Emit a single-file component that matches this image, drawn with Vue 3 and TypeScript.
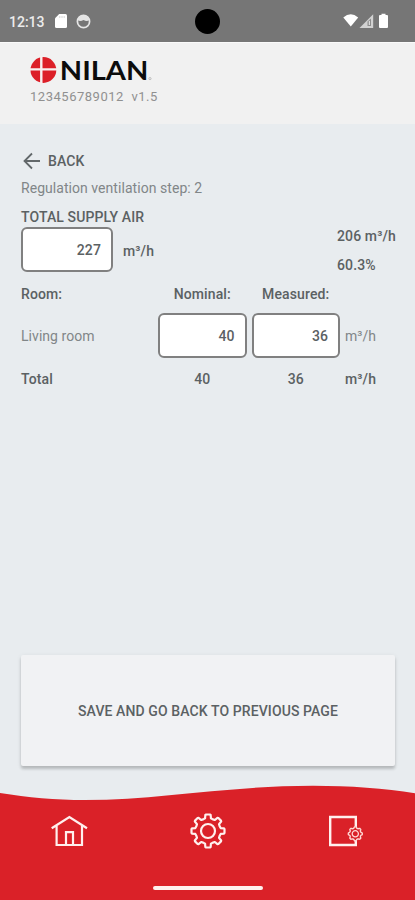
<script setup lang="ts">
import { computed, ref } from 'vue'

interface Room {
  name: string
  nominal: string
  measured: string
}

const totalAir = ref('227')
const rooms = ref<Room[]>([{ name: 'Living room', nominal: '40', measured: '36' }])

const nominalTotal = computed(() => rooms.value.reduce((sum, r) => sum + Number(r.nominal), 0))
const measuredTotal = computed(() => rooms.value.reduce((sum, r) => sum + Number(r.measured), 0))

// Closed outline of a cog centred on 0,0
function cog(teeth: number, outer: number, inner: number): string {
  const profile: [number, number][] = [
    [-0.5, inner],
    [-0.29, inner + 0.4],
    [-0.21, outer - 0.4],
    [-0.14, outer],
    [0.14, outer],
    [0.21, outer - 0.4],
    [0.29, inner + 0.4],
  ]
  const points: string[] = []
  for (let i = 0; i < teeth; i++) {
    for (const [offset, radius] of profile) {
      const a = ((i + offset) / teeth) * Math.PI * 2
      points.push(`${(radius * Math.sin(a)).toFixed(2)},${(-radius * Math.cos(a)).toFixed(2)}`)
    }
  }
  return `M${points.join('L')}Z`
}

const bigCog = cog(8, 16.6, 12.6)
const smallCog = cog(8, 7, 5.6)
</script>

<template>
  <div class="screen">
    <div class="status">
      <span class="clock">12:13</span>
      <svg class="sd" width="12" height="14" viewBox="0 0 12 14">
        <path d="M4.2 0H10.5Q12 0 12 1.5V12.5Q12 14 10.5 14H1.5Q0 14 0 12.5V4.2Z" fill="#fff" />
        <path d="M4.8 2v2M7 2v2M9.2 2v2" stroke="#ccc" stroke-width=".8" />
      </svg>
      <svg class="face" width="15" height="15" viewBox="0 0 15 15">
        <circle cx="7.5" cy="7.5" r="6.1" fill="none" stroke="#e6e6e6" stroke-width="1.7" />
        <path d="M1.6 5.8Q2.5 1.4 7.5 1.4Q12.5 1.4 13.4 5.8Q11 8.2 7.5 6Q4 8.2 1.6 5.8Z" fill="#e4e4e4" />
      </svg>
      <span class="camera"></span>
      <svg class="signals" width="46" height="16" viewBox="0 0 46 16">
        <path d="M.3 4.5Q7.7-1.8 15.2 4.5L7.8 13.6Z" fill="#fff" />
        <path d="M16.5 15L30.2 1.2V15Z" fill="#d2d2d2" />
        <path d="M24.5 13V8.5L28 5.5V13Z" fill="#8c8c8c" />
        <path d="M26.3 7.8V12" stroke="#eee" />
        <path d="M36 3Q36 2 37 2H38.5V.8H42.5V2H44Q45 2 45 3V14Q45 15 44 15H37Q36 15 36 14Z" fill="#fff" />
      </svg>
    </div>

    <header class="header">
      <svg class="logo" width="124" height="38" viewBox="0 -5 124 38">
        <circle cx="13.4" cy="14" r="12.9" fill="#dc1f28" />
        <path d="M0 13.4H27M11.3 0V28" stroke="#f8f0f0" stroke-width="2.4" />
        <text class="brand" x="29.8" y="24" textLength="88.6" lengthAdjust="spacingAndGlyphs">NILAN</text>
        <circle cx="120" cy="22.6" r="1.1" fill="none" stroke="#aaa" stroke-width=".7" />
      </svg>
      <span class="serial">123456789012&nbsp; v1.5</span>
    </header>

    <main class="content">
      <div class="back">
        <svg width="18" height="18" viewBox="0 0 18 18">
          <path d="M17 9H2M9 1.5L1.5 9L9 16.5" fill="none" stroke="#62686a" stroke-width="1.8" />
        </svg>
        <span>BACK</span>
      </div>
      <p class="step">Regulation ventilation step: 2</p>
      <p class="title">TOTAL SUPPLY AIR</p>
      <div class="supply">
        <input v-model="totalAir" class="field total-field" />
        <span class="unit">m³/h</span>
        <div class="readings">
          <span>206 m³/h</span>
          <span>60.3%</span>
        </div>
      </div>

      <div class="row head">
        <span>Room:</span>
        <span class="mid">Nominal:</span>
        <span class="mid">Measured:</span>
      </div>
      <div v-for="room in rooms" :key="room.name" class="row room">
        <span>{{ room.name }}</span>
        <input v-model="room.nominal" class="field" />
        <input v-model="room.measured" class="field" />
        <span>m³/h</span>
      </div>
      <div class="row sum">
        <span>Total</span>
        <span class="mid">{{ nominalTotal }}</span>
        <span class="mid">{{ measuredTotal }}</span>
        <span>m³/h</span>
      </div>

      <button class="save">SAVE AND GO BACK TO PREVIOUS PAGE</button>
    </main>

    <footer class="footer">
      <svg class="wave" width="415" height="18" viewBox="0 0 415 18">
        <path d="M0 8C28 12.5 55 15 85 15C160 15 225 .8 313 .8C350 .8 385 3.5 415 8.2V18H0Z" fill="#da2128" />
      </svg>
      <div class="panel">
        <nav class="tabs">
          <svg width="38" height="38" viewBox="-19 -19 38 38">
            <path d="M-17.3-2.7L.4-14L18-2.7M-12.4-5V14H13V-5M-3 14V1.2H4V14" fill="none" stroke="#fff0ee" stroke-width="2.2" />
          </svg>
          <svg width="38" height="38" viewBox="-19 -19 38 38">
            <path :d="bigCog" fill="none" stroke="#fff0ee" stroke-width="2.2" stroke-linejoin="round" />
            <circle r="7" fill="none" stroke="#fff0ee" stroke-width="2.2" />
          </svg>
          <svg width="38" height="38" viewBox="-18 -19 38 38">
            <path d="M10.8-4V-14H-14.8V14H10.8V10" fill="none" stroke="#fff0ee" stroke-width="2.4" />
            <g transform="translate(10.3 2.8)">
              <path :d="smallCog" fill="#da2128" stroke="#ffd8d5" stroke-width="1.4" stroke-linejoin="round" />
              <circle r="3.1" fill="none" stroke="#ffd8d5" stroke-width="1.3" />
            </g>
          </svg>
        </nav>
        <span class="handle"></span>
      </div>
    </footer>
  </div>
</template>

<style>
body {
  margin: 0;
}
</style>

<style scoped>
.screen {
  width: 415px;
  height: 900px;
  display: flex;
  flex-direction: column;
  overflow: hidden;
  background: #e8ecef;
  color: #5b6163;
  font: 500 14px/20px Roboto, sans-serif;
  letter-spacing: 0.12px;
}

.status {
  position: relative;
  box-sizing: border-box;
  height: 42px;
  padding: 0 26px 0 9px;
  display: flex;
  align-items: center;
  background: #767676;
  color: #ececec;
}

.clock {
  width: 46px;
  margin-top: 2px;
  font-size: 14px;
  letter-spacing: 0;
}

.face {
  margin-left: 9px;
}

.camera {
  position: absolute;
  left: 195px;
  top: 9px;
  width: 25px;
  height: 25px;
  border-radius: 50%;
  background: #000;
}

.signals {
  margin-left: auto;
}

.header {
  box-sizing: border-box;
  height: 82px;
  padding: 8px 30px 0;
  display: flex;
  flex-direction: column;
  background: #f1f1f1;
  border-top: 1px solid #fafafa;
}

.logo {
  display: block;
}

.brand {
  font: 700 27.5px Lato, sans-serif;
  letter-spacing: 0;
  fill: #0c0c0c;
}

.serial {
  margin-top: -2px;
  line-height: 20px;
  font-size: 13px;
  font-weight: 400;
  letter-spacing: 0.52px;
  color: #909090;
}

.content {
  flex: 1;
  display: flex;
  flex-direction: column;
  padding: 27px 20px 0 21px;
}

.back {
  display: flex;
  align-items: center;
  gap: 7px;
  padding-left: 2px;
  height: 20px;
}

.step,
.title {
  margin: 0;
}

.step {
  margin-top: 7px;
  font-weight: 400;
  letter-spacing: 0.05px;
  color: #818688;
}

.title {
  margin-top: 9px;
}

.supply {
  display: flex;
  height: 45px;
  align-items: center;
}

.field {
  box-sizing: border-box;
  width: 100%;
  height: 45px;
  padding: 0 10px 0 4px;
  border: 2px solid #808080;
  border-radius: 6px;
  background: #fff;
  color: #5b6163;
  font: inherit;
  font-weight: 500;
  letter-spacing: inherit;
  text-align: right;
  outline: none;
}

.total-field {
  width: 92px;
}

.unit {
  margin-left: 10px;
  margin-top: 3px;
}

.readings {
  margin-left: auto;
  margin-top: 2px;
  display: flex;
  flex-direction: column;
  gap: 9px;
  width: 58px;
  white-space: nowrap;
}

.row {
  display: grid;
  grid-template-columns: 132px 88.5px 88.5px 1fr;
  column-gap: 5px;
  align-items: center;
}

.mid {
  text-align: center;
}

.head {
  margin-top: 12px;
}

.room {
  margin-top: 9px;
  font-weight: 400;
  letter-spacing: 0.05px;
  color: #818688;
}

.sum {
  margin-top: 11px;
}

.save {
  margin-top: auto;
  margin-bottom: 19px;
  height: 111px;
  border: 0;
  border-radius: 2px;
  background: #f1f2f4;
  box-shadow: 0 3px 3px rgba(0, 0, 0, 0.18), 0 1px 5px rgba(0, 0, 0, 0.08);
  color: #5b6163;
  font: inherit;
  letter-spacing: 0.1px;
}

.footer {
  height: 115px;
  display: flex;
  flex-direction: column;
}

.wave {
  display: block;
}

.panel {
  flex: 1;
  display: flex;
  flex-direction: column;
  justify-content: space-between;
  align-items: center;
  padding: 9px 0 10px;
  background: #da2128;
}

.tabs {
  box-sizing: border-box;
  width: 100%;
  display: flex;
  justify-content: space-between;
  padding: 0 50px;
}

.handle {
  width: 110px;
  height: 4px;
  border-radius: 2px;
  background: #fff0ee;
}
</style>
